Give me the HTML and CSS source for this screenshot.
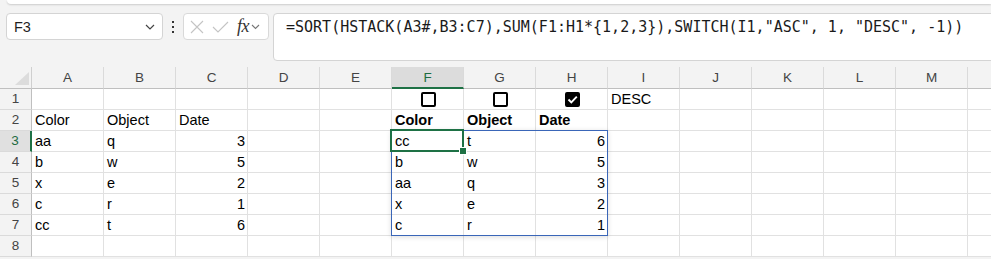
FILE: index.html
```html
<!DOCTYPE html>
<html lang="en">
<head>
    <meta charset="UTF-8">
    <meta name="viewport" content="width=device-width, initial-scale=1.0">
    <title>Sheet</title>
    <link rel="stylesheet" href="styles.css">
</head>
<body>
    <div class="ribbon"></div>

    <div class="formula_row">
        <div class="name_box">
            <span>F3</span>
            <svg width="10" height="6" viewBox="0 0 10 6"><path d="M1 1l4 4 4-4" fill="none" stroke="#444" stroke-width="1.2"/></svg>
        </div>
        <div class="dots"><i></i><i></i><i></i></div>
        <div class="fx_box">
            <svg class="cancel" width="14" height="14" viewBox="0 0 14 14"><path d="M1 1l12 12M13 1L1 13" stroke="#c4c4c4" stroke-width="1.1"/></svg>
            <svg class="enter" width="17" height="12" viewBox="0 0 17 12"><path d="M1 6l5 5L16 1" fill="none" stroke="#c4c4c4" stroke-width="1.1"/></svg>
            <span class="fx">fx</span>
            <svg width="9" height="6" viewBox="0 0 9 6"><path d="M1 1l3.5 3.5L8 1" fill="none" stroke="#777" stroke-width="1.1"/></svg>
        </div>
        <div class="formula">=SORT(HSTACK(A3#,B3:C7),SUM(F1:H1*{1,2,3}),SWITCH(I1,"ASC", 1, "DESC", -1))</div>
    </div>

    <div class="sheet">
        <div class="grid">
            <!-- column headers -->
            <div class="corner"><i></i></div>
            <div class="ch">A</div><div class="ch">B</div><div class="ch">C</div><div class="ch">D</div><div class="ch">E</div>
            <div class="ch sel">F</div><div class="ch">G</div><div class="ch">H</div><div class="ch">I</div><div class="ch">J</div>
            <div class="ch">K</div><div class="ch">L</div><div class="ch">M</div><div class="ch"></div>

            <!-- row 1 -->
            <div class="rh">1</div>
            <div class="c"></div><div class="c"></div><div class="c"></div><div class="c"></div><div class="c"></div>
            <div class="c mid"><span class="cb"></span></div>
            <div class="c mid"><span class="cb"></span></div>
            <div class="c mid"><span class="cb on"><svg width="11" height="9" viewBox="0 0 11 9"><path d="M1.5 4.5l2.8 2.8L9.8 1.6" fill="none" stroke="#fff" stroke-width="1.9"/></svg></span></div>
            <div class="c">DESC</div>
            <div class="c"></div><div class="c"></div><div class="c"></div><div class="c"></div><div class="c"></div>

            <!-- row 2 -->
            <div class="rh">2</div>
            <div class="c">Color</div><div class="c">Object</div><div class="c">Date</div><div class="c"></div><div class="c"></div>
            <div class="c b">Color</div><div class="c b">Object</div><div class="c b">Date</div>
            <div class="c"></div><div class="c"></div><div class="c"></div><div class="c"></div><div class="c"></div><div class="c"></div>

            <!-- row 3 -->
            <div class="rh sel">3</div>
            <div class="c">aa</div><div class="c">q</div><div class="c n">3</div><div class="c"></div><div class="c"></div>
            <div class="c">cc</div><div class="c">t</div><div class="c n">6</div>
            <div class="c"></div><div class="c"></div><div class="c"></div><div class="c"></div><div class="c"></div><div class="c"></div>

            <!-- row 4 -->
            <div class="rh">4</div>
            <div class="c">b</div><div class="c">w</div><div class="c n">5</div><div class="c"></div><div class="c"></div>
            <div class="c">b</div><div class="c">w</div><div class="c n">5</div>
            <div class="c"></div><div class="c"></div><div class="c"></div><div class="c"></div><div class="c"></div><div class="c"></div>

            <!-- row 5 -->
            <div class="rh">5</div>
            <div class="c">x</div><div class="c">e</div><div class="c n">2</div><div class="c"></div><div class="c"></div>
            <div class="c">aa</div><div class="c">q</div><div class="c n">3</div>
            <div class="c"></div><div class="c"></div><div class="c"></div><div class="c"></div><div class="c"></div><div class="c"></div>

            <!-- row 6 -->
            <div class="rh">6</div>
            <div class="c">c</div><div class="c">r</div><div class="c n">1</div><div class="c"></div><div class="c"></div>
            <div class="c">x</div><div class="c">e</div><div class="c n">2</div>
            <div class="c"></div><div class="c"></div><div class="c"></div><div class="c"></div><div class="c"></div><div class="c"></div>

            <!-- row 7 -->
            <div class="rh">7</div>
            <div class="c">cc</div><div class="c">t</div><div class="c n">6</div><div class="c"></div><div class="c"></div>
            <div class="c">c</div><div class="c">r</div><div class="c n">1</div>
            <div class="c"></div><div class="c"></div><div class="c"></div><div class="c"></div><div class="c"></div><div class="c"></div>

            <!-- row 8 -->
            <div class="rh">8</div>
            <div class="c"></div><div class="c"></div><div class="c"></div><div class="c"></div><div class="c"></div>
            <div class="c"></div><div class="c"></div><div class="c"></div><div class="c"></div><div class="c"></div>
            <div class="c"></div><div class="c"></div><div class="c"></div><div class="c"></div>
        </div>

        <div class="spill"></div>
        <div class="active"><span class="handle"></span></div>
    </div>
</body>
</html>
```

FILE: styles.css
```css
body {
    margin: 0;
    width: 991px;
    height: 259px;
    overflow: hidden;
    background: #f3f3f3;
    font-family: "Liberation Sans", Arial, sans-serif;
}

.ribbon {
    height: 4px;
    margin-left: 7px;
    background: #fff;
    border-bottom-left-radius: 8px;
    box-shadow: 0 1px 2px rgba(0, 0, 0, .16);
}

.formula_row {
    display: flex;
    align-items: flex-start;
    height: 57px;
    padding: 9px 0 0 6px;
    box-sizing: border-box;
}

.name_box {
    width: 157px;
    height: 27px;
    box-sizing: border-box;
    display: flex;
    align-items: center;
    justify-content: space-between;
    padding: 0 7px 0 7px;
    background: #fff;
    border: 1px solid #d4d4d4;
    border-radius: 4px;
    font-size: 14.5px;
    color: #1f1f1f;
}

.dots {
    width: 20px;
    display: flex;
    flex-direction: column;
    align-items: center;
    gap: 3px;
    padding-top: 8px;
}

.dots i {
    width: 2px;
    height: 2px;
    background: #333;
}

.fx_box {
    width: 86px;
    height: 27px;
    box-sizing: border-box;
    display: flex;
    align-items: center;
    padding-left: 6px;
    background: #fff;
    border: 1px solid #d9d9d9;
    border-radius: 4px;
}

.fx_box .cancel {
    margin-right: 8px;
}

.fx_box .enter {
    margin-right: 8px;
}

.fx {
    font-family: "Liberation Serif", serif;
    font-style: italic;
    font-size: 18px;
    color: #333;
    margin-right: 2px;
    letter-spacing: -0.5px;
}

.formula {
    flex: 1;
    margin-left: 4px;
    margin-right: -12px;
    height: 48px;
    box-sizing: border-box;
    padding: 4px 12px;
    background: #fff;
    border: 1px solid #d4d4d4;
    border-radius: 4px;
    font-family: "DejaVu Sans Mono", monospace;
    font-size: 15px;
    line-height: 18px;
    color: #1a1a1a;
    white-space: nowrap;
}

.sheet {
    position: relative;
    padding-top: 6px;
}

.grid {
    display: grid;
    grid-template-columns: 32px repeat(14, 72px);
    grid-template-rows: 22px;
    grid-auto-rows: 21px;
    font-size: 14.5px;
}

.grid > div {
    box-sizing: border-box;
}

.corner {
    position: relative;
    border-right: 1px solid #cfcfcf;
    border-bottom: 1px solid #bfbfbf;
}

.corner i {
    position: absolute;
    right: 2px;
    bottom: 3px;
    width: 0;
    height: 0;
    border-left: 14px solid transparent;
    border-bottom: 13px solid #dcdcdc;
}

.ch {
    text-align: center;
    line-height: 21px;
    font-size: 13.5px;
    color: #444;
    border-right: 1px solid #dadada;
    border-bottom: 1px solid #bfbfbf;
}

.ch.sel {
    background: #dcdcdc;
    color: #1e6c41;
    border-bottom: 2px solid #1e7145;
}

.rh {
    text-align: center;
    line-height: 20px;
    font-size: 13.5px;
    color: #444;
    border-right: 1px solid #bfbfbf;
    border-bottom: 1px solid #dadada;
}

.rh.sel {
    background: #e0e0e0;
    color: #1e6c41;
    border-right: 2px solid #1e7145;
}

.c {
    background: #fff;
    padding: 0 2px 0 3px;
    line-height: 20px;
    color: #000;
    white-space: nowrap;
    border-right: 1px solid #e1e1e1;
    border-bottom: 1px solid #e1e1e1;
}

.c.n {
    text-align: right;
}

.c.b {
    font-weight: bold;
}

.c.mid {
    display: flex;
    align-items: center;
    justify-content: center;
}

.cb {
    width: 15px;
    height: 15px;
    box-sizing: border-box;
    border: 2px solid #000;
    border-radius: 2px;
    display: flex;
    align-items: center;
    justify-content: center;
}

.cb.on {
    background: #000;
}

.spill {
    position: absolute;
    left: 391px;
    top: 69px;
    width: 217px;
    height: 106px;
    box-sizing: border-box;
    border: 1px solid #3a66b8;
    box-shadow: 0 1px 5px rgba(0, 0, 0, .14);
}

.active {
    position: absolute;
    left: 390px;
    top: 68px;
    width: 74px;
    height: 23px;
    box-sizing: border-box;
    border: 2px solid #1e7145;
}

.handle {
    position: absolute;
    right: -5px;
    bottom: -5px;
    width: 6px;
    height: 6px;
    background: #1e7145;
    border: 1px solid #fff;
}
```
